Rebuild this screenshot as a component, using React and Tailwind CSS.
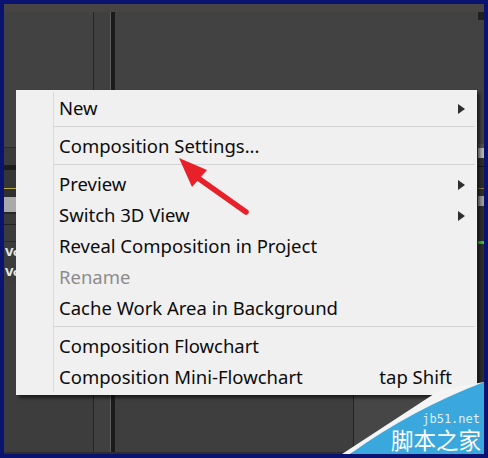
import React from 'react';

const menuFont = { fontFamily: '"Noto Sans", "Open Sans", sans-serif' };

// context menu rows; "sep" draws a divider line
const items = [
    { label: 'New', sub: true },
    'sep',
    { label: 'Composition Settings...' },
    'sep',
    { label: 'Preview', sub: true },
    { label: 'Switch 3D View', sub: true },
    { label: 'Reveal Composition in Project' },
    { label: 'Rename', disabled: true },
    { label: 'Cache Work Area in Background' },
    'sep',
    { label: 'Composition Flowchart' },
    { label: 'Composition Mini-Flowchart', hint: 'tap Shift' },
];

const MenuRow = ({ item }) => (
    <div className="flex h-[31px] items-stretch">
        <div className="w-[38px] shrink-0 border-r border-[#dadada]" />
        <div className="flex flex-1 items-center pl-[5px] pt-[2px]">
            <span className={`flex-1 text-[18.5px] leading-none ${item.disabled ? 'text-[#8c8c8c]' : 'text-[#0c0c0c]'}`}>
                {item.label}
            </span>
            {item.sub && (
                <span className="mr-[12px] h-0 w-0 border-y-[5px] border-l-[7px] border-y-transparent border-l-[#2f2f2f]" />
            )}
            {item.hint && (
                <span className="mr-[25px] text-[18.5px] leading-none text-[#0c0c0c]">{item.hint}</span>
            )}
        </div>
    </div>
);

const MenuSeparator = () => (
    <div className="flex h-[7px]">
        <div className="w-[38px] shrink-0 border-r border-[#dadada]" />
        <div className="flex flex-1 items-center pr-[2px]">
            <div className="h-px w-full bg-[#d4d4d4]" />
        </div>
    </div>
);

const ContextMenu = () => (
    <div
        className="absolute left-[12px] top-[86px] w-[461px] bg-[#f0f0f0] pt-[2px] pb-[3px] shadow-[3px_3px_3px_rgba(0,0,0,0.55)]"
        style={menuFont}
    >
        {items.map((item, i) =>
            item === 'sep' ? <MenuSeparator key={i} /> : <MenuRow key={i} item={item} />
        )}
    </div>
);

// timeline bits peeking out on the left edge
const LeftPanel = () => (
    <div className="flex w-[89px] flex-col bg-[#424242]">
        <div className="h-[135px]" />
        <div className="h-px bg-[#2c2c2c]" />
        <div className="h-[17px] bg-[#3b3b3b]" />
        <div className="h-[5px] bg-[#1c1c1c]" />
        <div className="h-[18px] bg-[#363636]" />
        <div className="h-px bg-[#b9ab3c]" />
        <div className="h-[8px] bg-[#2f2f2f]" />
        <div className="h-[15px] bg-[#a9a9a9]" />
        <div className="h-[2px] bg-[#262626]" />
        <div className="h-[10px] bg-[#3a3a3a]" />
        <div className="h-px bg-[#222]" />
        <div className="h-[16px] bg-[#3c3c3c]" />
        <div className="h-px bg-[#2a2a2a]" />
        <div className="flex flex-col bg-[#3c3c3c] pl-[1px] pt-[1px] text-[11px] font-bold leading-[20px] text-[#e6e6e6]" style={{ fontFamily: '"DejaVu Sans", sans-serif' }}>
            <span>Vo</span>
            <span>Vo</span>
        </div>
        <div className="flex-1 bg-[#3d3d3d]" />
    </div>
);

const RightStrip = () => (
    <div className="flex w-[6px] flex-col bg-[#2e2e2e]">
        <div className="h-[8px] bg-[#1f1f1f]" />
        <div className="h-[124px] bg-[#424242]" />
        <div className="h-[4px] bg-[#505050]" />
        <div className="h-[10px] bg-[#b3b3b3]" />
        <div className="h-[8px]" />
        <div className="h-px bg-[#151515]" />
        <div className="h-[21px]" />
        <div className="h-px bg-[#8a7a40]" />
        <div className="h-[7px]" />
        <div className="h-[10px] bg-[#9c9c9c]" />
        <div className="h-[35px]" />
        <div className="h-[3px] bg-[#38c23c]" />
        <div className="flex-1" />
    </div>
);

const Watermark = () => (
    <div className="absolute right-0 bottom-0 h-[72px] w-[142px]">
        <svg className="absolute inset-0" width="142" height="72" viewBox="0 0 142 72">
            <polygon points="0,72 98,8 142,0 142,2 8,72" fill="#f4f4f4" />
            <path d="M8,72 Q69,28 142,0 L142,72 Z" fill="#3aa8dc" />
        </svg>
        <div className="absolute right-[3px] bottom-[1px] flex flex-col items-end">
            <span
                className="mr-px text-[12px] leading-[14px] text-[#dff1fb]"
                style={{ fontFamily: '"DejaVu Sans Mono", monospace' }}
            >
                jb51.net
            </span>
            <span
                className="text-[22.5px] leading-[27px] text-white"
                style={{ fontFamily: '"Noto Sans CJK SC", sans-serif' }}
            >
                脚本之家
            </span>
        </div>
    </div>
);

const RedArrow = () => (
    <svg className="pointer-events-none absolute left-0 top-0" width="480" height="450" viewBox="0 0 480 450">
        <line x1="194" y1="174" x2="242" y2="208" stroke="#e8202a" strokeWidth="5.5" strokeLinecap="round" />
        <polygon points="175,154 203,166 188,183" fill="#e8202a" />
    </svg>
);

export default function App() {
    return (
        <div className="h-[458px] w-[488px] bg-[#0b1370] p-[4px]">
            <div className="relative flex h-full w-full flex-col bg-[#424242]">
                <div className="h-[8px] bg-[#484444]" />
                <div className="flex flex-1">
                    <LeftPanel />
                    <div className="w-px bg-[#262626]" />
                    <div className="w-[16px] bg-[#404040]" />
                    <div className="w-px bg-[#5c5c5c]" />
                    <div className="w-[4px] bg-[#1b1b1b]" />
                    <div className="flex flex-1 flex-col">
                        <div className="flex-1 bg-[#424242]" />
                        <div className="flex h-[57px]">
                            <div className="w-[238px] bg-[#3e3e3e]" />
                            <div className="w-px bg-[#232323]" />
                            <div className="flex-1 bg-[#464646]" />
                        </div>
                    </div>
                    <RightStrip />
                </div>
                <div className="h-[2px] bg-[#2e2e2e]" />

                <ContextMenu />
                <RedArrow />
                <Watermark />
            </div>
        </div>
    );
}
